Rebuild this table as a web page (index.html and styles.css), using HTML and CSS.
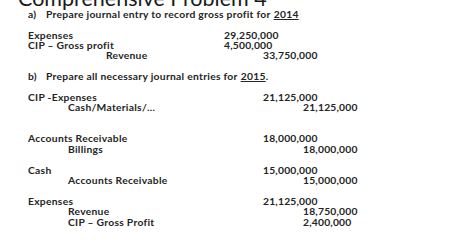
FILE: index.html
```html
<!DOCTYPE html>
<html>
<head>
<meta charset="utf-8">
<link rel="stylesheet" href="styles.css">
</head>
<body>
<div class="page">
  <div class="title">Comprehensive Problem 4</div>
  <div class="q"><span class="qn">a)</span>Prepare journal entry to record gross profit for <u>2014</u></div>
  <div class="blank"></div>
  <div class="sec sec-a">
    <div class="row"><span class="lbl">Expenses</span><span class="dr">29,250,000</span></div>
    <div class="row"><span class="lbl">CIP – Gross profit</span><span class="dr">4,500,000</span></div>
    <div class="row"><span class="lbl ind-a">Revenue</span><span class="cr">33,750,000</span></div>
  </div>
  <div class="blank"></div>
  <div class="q"><span class="qn">b)</span>Prepare all necessary journal entries for <u>2015</u>.</div>
  <div class="blank"></div>
  <div class="sec sec-b">
    <div class="row"><span class="lbl">CIP -Expenses</span><span class="dr">21,125,000</span></div>
    <div class="row"><span class="lbl ind-b">Cash/Materials/...</span><span class="cr">21,125,000</span></div>
    <div class="blank"></div>
    <div class="blank"></div>
    <div class="row"><span class="lbl">Accounts Receivable</span><span class="dr">18,000,000</span></div>
    <div class="row"><span class="lbl ind-b">Billings</span><span class="cr">18,000,000</span></div>
    <div class="blank"></div>
    <div class="row"><span class="lbl">Cash</span><span class="dr">15,000,000</span></div>
    <div class="row"><span class="lbl ind-b">Accounts Receivable</span><span class="cr">15,000,000</span></div>
    <div class="blank"></div>
    <div class="row"><span class="lbl">Expenses</span><span class="dr">21,125,000</span></div>
    <div class="row"><span class="lbl ind-b">Revenue</span><span class="cr">18,750,000</span></div>
    <div class="row"><span class="lbl ind-b">CIP – Gross Profit</span><span class="cr">2,400,000</span></div>
  </div>
</div>
</body>
</html>
```
FILE: styles.css
```css
html, body {
  margin: 0;
  padding: 0;
  background: #ffffff;
}
body {
  width: 452px;
  height: 242px;
  overflow: hidden;
  font-family: Lato, "Open Sans", sans-serif;
  color: #242424;
}
.page {
  padding-left: 28px;
}
.title {
  font-family: Lato, sans-serif;
  font-weight: 400;
  font-size: 21.5px;
  line-height: 21px;
  margin-top: -12px;
  margin-left: -10px;
  height: 20.8px;
  color: #1a1a1a;
}
.q, .row, .blank {
  height: 10.4px;
  line-height: 10.4px;
  font-size: 10.3px;
  font-weight: 700;
  white-space: nowrap;
}
.dr, .cr {
  letter-spacing: 0.2px;
}
.q, .lbl {
  letter-spacing: 0.28px;
}
.q {
  display: flex;
}
.qn {
  width: 18px;
}
.q u {
  text-decoration-thickness: 1px;
  text-underline-offset: 1px;
  margin-left: 3px;
}
.sec {
  display: flex;
  flex-direction: column;
}
.row {
  display: grid;
}
.sec-a .row {
  grid-template-columns: 196px 39px 1fr;
}
.sec-b .row {
  grid-template-columns: 235px 40px 1fr;
}
.lbl {
  grid-column: 1;
  grid-row: 1;
  overflow: visible;
}
.dr {
  grid-column: 2 / 4;
  grid-row: 1;
}
.cr {
  grid-column: 3;
  grid-row: 1;
}
.ind-a {
  padding-left: 78px;
}
.ind-b {
  padding-left: 40px;
}
```
